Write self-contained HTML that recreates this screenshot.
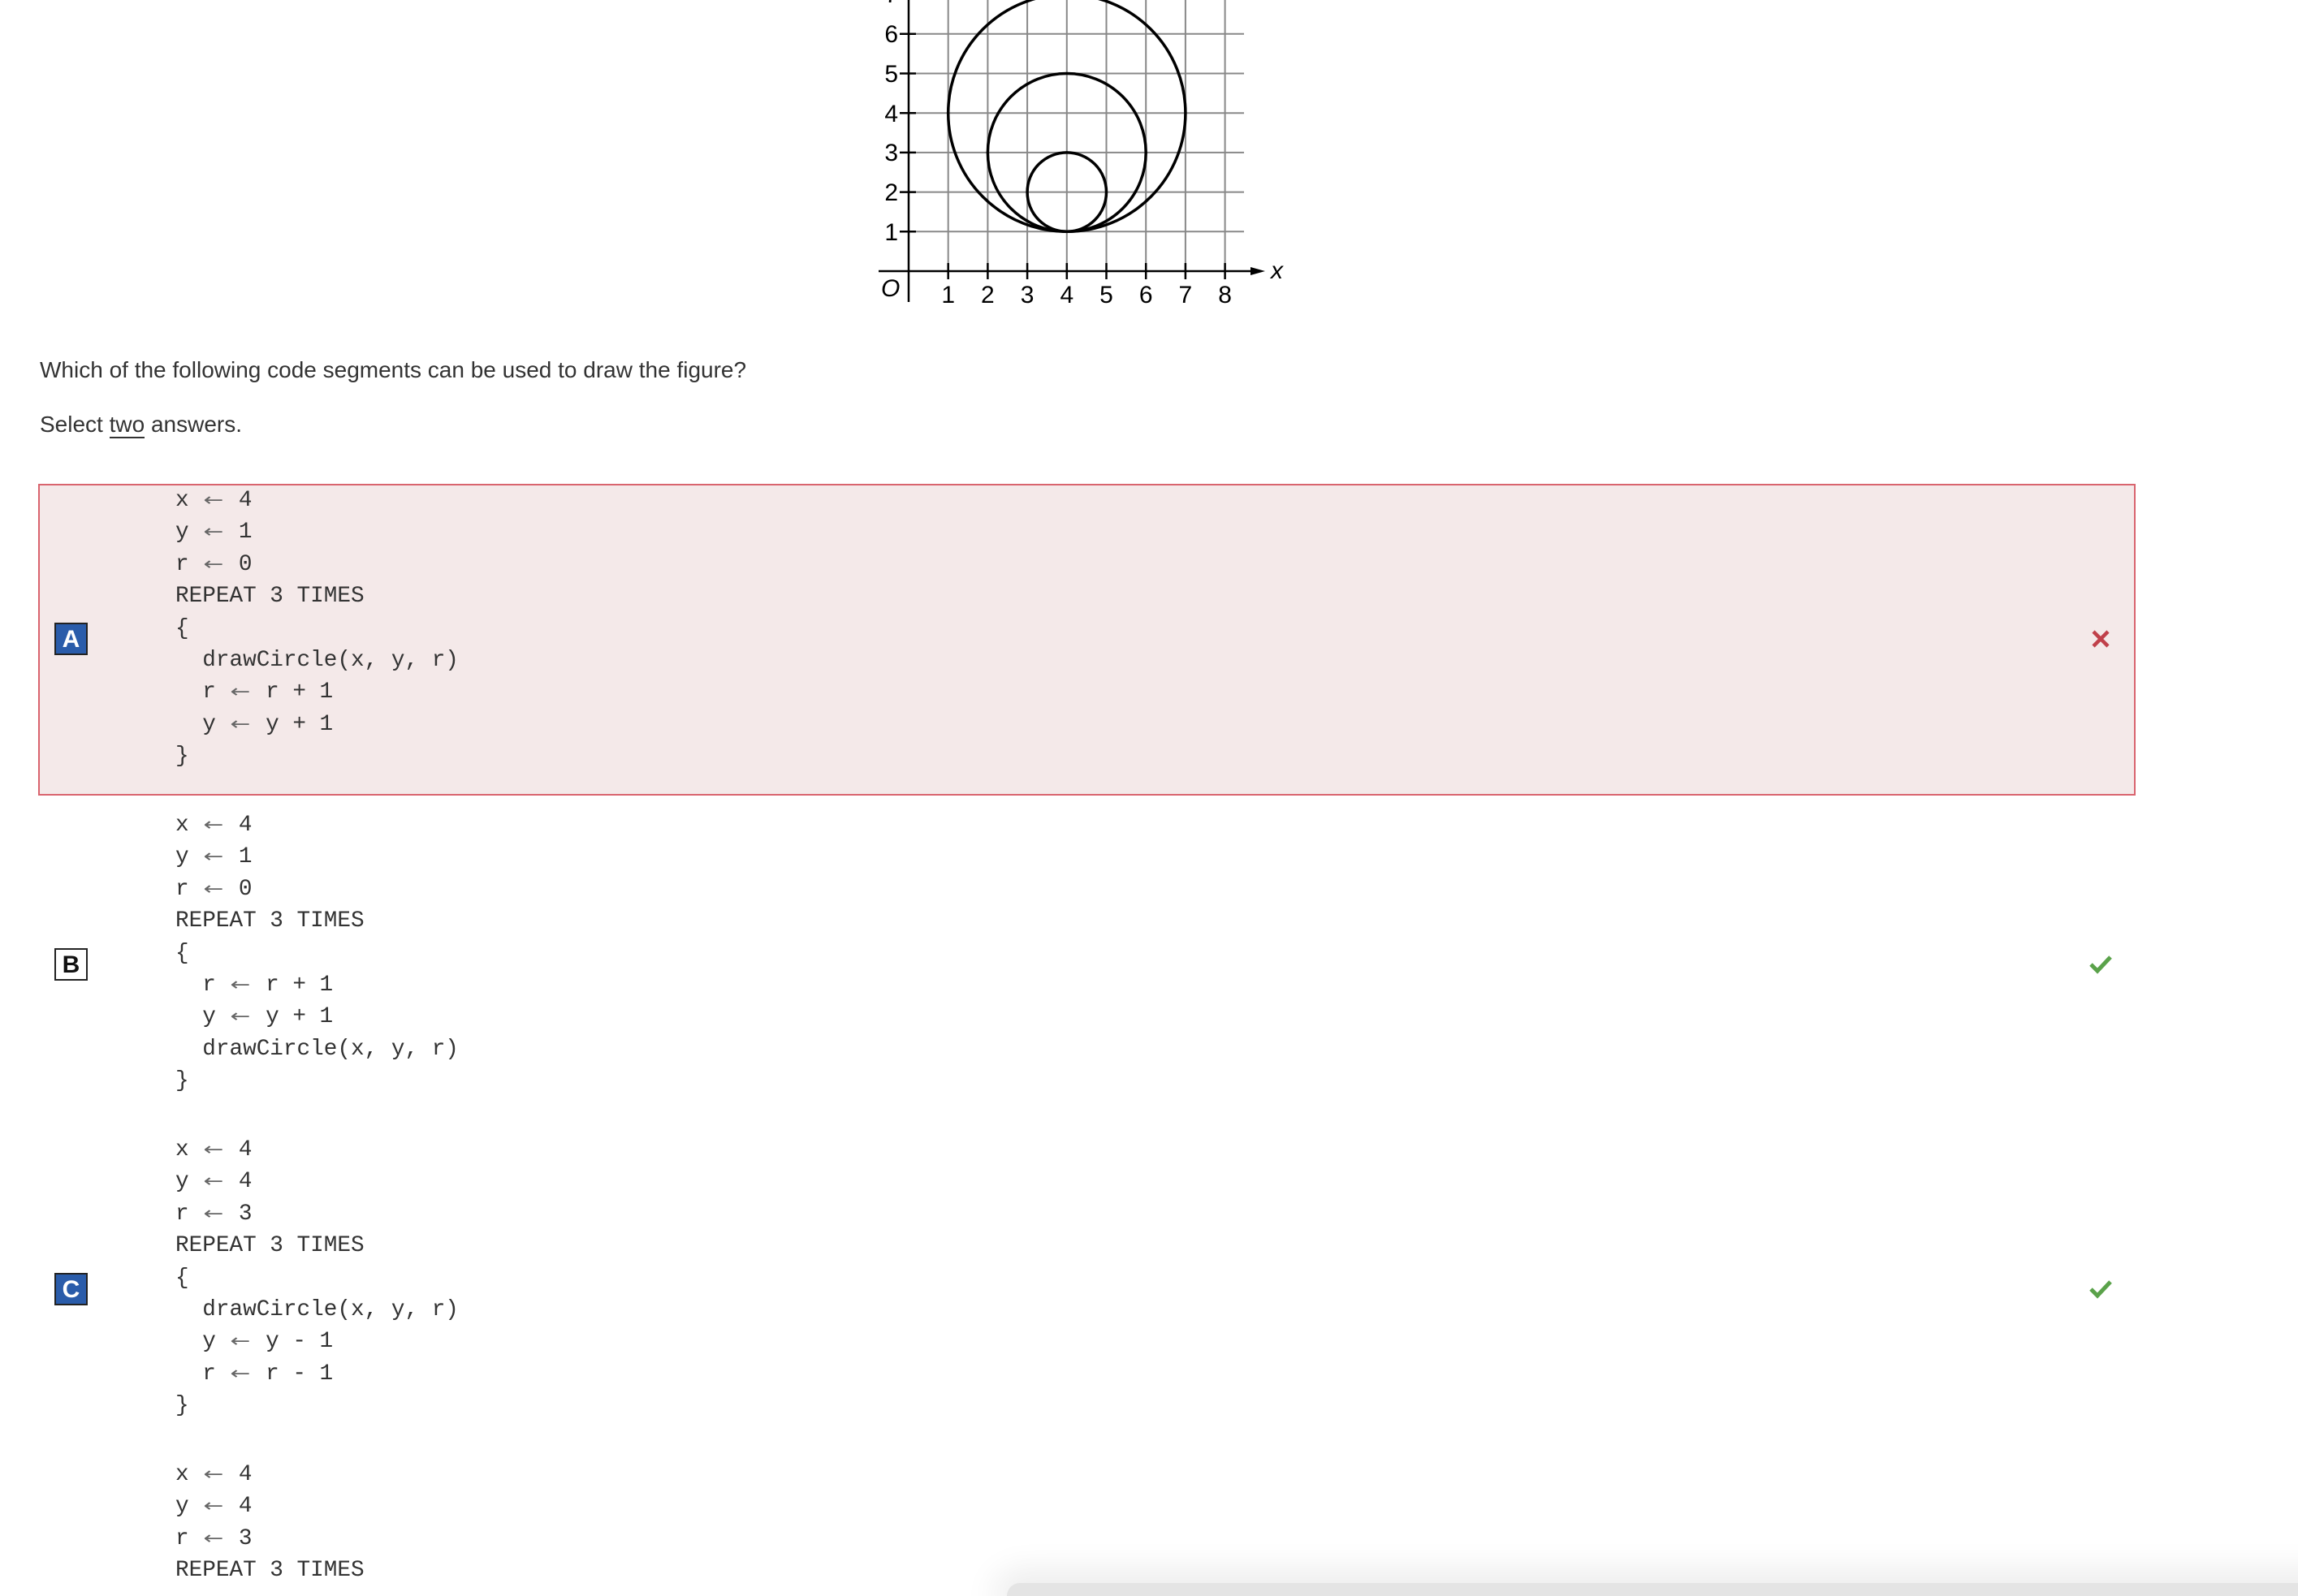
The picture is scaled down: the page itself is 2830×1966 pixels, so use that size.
<!DOCTYPE html>
<html><head><meta charset="utf-8"><style>
html,body{margin:0;padding:0;background:#fff;width:2830px;height:1966px;overflow:hidden;position:relative}
.t{position:absolute;left:49px;font-family:"Liberation Sans",sans-serif;font-size:28px;color:#333}
.box{position:absolute;left:47px;top:596px;width:2579px;height:380px;border:2px solid #d9646e;background:#f4e9e9}
.code{position:absolute;left:216px;font-family:"Liberation Mono",monospace;font-size:27.7px;color:#333;line-height:39.4px;white-space:pre}
.a{display:inline-block;width:28px;text-align:center;line-height:20px;font-family:"DejaVu Sans",sans-serif;font-size:22px;color:#666;transform:scaleX(1.35)}
.badge{position:absolute;left:67px;width:37px;height:36px;border:2px solid #222;font-family:"Liberation Sans",sans-serif;font-weight:bold;font-size:30px;text-align:center;line-height:37px}
.icon{position:absolute;left:2572px}
</style></head><body>
<svg style="position:absolute;left:0;top:0" width="1700" height="400">
<g stroke="#888" stroke-width="2">
<line x1="1167.7" y1="0" x2="1167.7" y2="342"/><line x1="1216.4" y1="0" x2="1216.4" y2="342"/><line x1="1265.1" y1="0" x2="1265.1" y2="342"/><line x1="1313.8" y1="0" x2="1313.8" y2="342"/><line x1="1362.5" y1="0" x2="1362.5" y2="342"/><line x1="1411.2" y1="0" x2="1411.2" y2="342"/><line x1="1459.9" y1="0" x2="1459.9" y2="342"/><line x1="1508.6" y1="0" x2="1508.6" y2="342"/>
<line x1="1119" y1="285.3" x2="1532" y2="285.3"/><line x1="1119" y1="236.6" x2="1532" y2="236.6"/><line x1="1119" y1="187.9" x2="1532" y2="187.9"/><line x1="1119" y1="139.2" x2="1532" y2="139.2"/><line x1="1119" y1="90.5" x2="1532" y2="90.5"/><line x1="1119" y1="41.8" x2="1532" y2="41.8"/>
</g>
<g stroke="#000" stroke-width="2.5">
<line x1="1119" y1="0" x2="1119" y2="372"/><line x1="1082" y1="334" x2="1548" y2="334"/>
<line x1="1108" y1="285.3" x2="1128" y2="285.3"/><line x1="1108" y1="236.6" x2="1128" y2="236.6"/><line x1="1108" y1="187.9" x2="1128" y2="187.9"/><line x1="1108" y1="139.2" x2="1128" y2="139.2"/><line x1="1108" y1="90.5" x2="1128" y2="90.5"/><line x1="1108" y1="41.8" x2="1128" y2="41.8"/>
<line x1="1167.7" y1="324" x2="1167.7" y2="344"/><line x1="1216.4" y1="324" x2="1216.4" y2="344"/><line x1="1265.1" y1="324" x2="1265.1" y2="344"/><line x1="1313.8" y1="324" x2="1313.8" y2="344"/><line x1="1362.5" y1="324" x2="1362.5" y2="344"/><line x1="1411.2" y1="324" x2="1411.2" y2="344"/><line x1="1459.9" y1="324" x2="1459.9" y2="344"/><line x1="1508.6" y1="324" x2="1508.6" y2="344"/>
</g>
<polygon points="1558,334 1540,329 1540,339" fill="#000"/>
<g fill="none" stroke="#000" stroke-width="3.5">
<circle cx="1313.8" cy="236.6" r="48.7"/><circle cx="1313.8" cy="187.9" r="97.4"/><circle cx="1313.8" cy="139.2" r="146.1"/>
</g>
<g font-family="Liberation Sans,sans-serif" font-size="30" fill="#000">
<g text-anchor="end"><text x="1106" y="296">1</text><text x="1106" y="247">2</text><text x="1106" y="198">3</text><text x="1106" y="150">4</text><text x="1106" y="101">5</text><text x="1106" y="52">6</text><text x="1106" y="3">7</text></g>
<g text-anchor="middle"><text x="1167.7" y="373">1</text><text x="1216.4" y="373">2</text><text x="1265.1" y="373">3</text><text x="1313.8" y="373">4</text><text x="1362.5" y="373">5</text><text x="1411.2" y="373">6</text><text x="1459.9" y="373">7</text><text x="1508.6" y="373">8</text></g>
<text x="1085" y="365" font-style="italic">O</text><text x="1565" y="343" font-style="italic">x</text>
</g>
</svg>
<div class="t" style="top:440px">Which of the following code segments can be used to draw the figure?</div>
<div class="t" style="top:507px">Select <span style="border-bottom:2px solid #333">two</span> answers.</div>
<div class="box"></div>
<div class="code" style="top:597px">x <span class="a">←</span> 4
y <span class="a">←</span> 1
r <span class="a">←</span> 0
REPEAT 3 TIMES
{
  drawCircle(x, y, r)
  r <span class="a">←</span> r + 1
  y <span class="a">←</span> y + 1
}</div>
<div class="badge" style="top:767px;background:#2a5caa;color:#fff">A</div>
<svg class="icon" style="top:772px" width="30" height="30"><path d="M6 6L24 24M24 6L6 24" stroke="#c0404a" stroke-width="4.5"/></svg>
<div class="code" style="top:997px">x <span class="a">←</span> 4
y <span class="a">←</span> 1
r <span class="a">←</span> 0
REPEAT 3 TIMES
{
  r <span class="a">←</span> r + 1
  y <span class="a">←</span> y + 1
  drawCircle(x, y, r)
}</div>
<div class="badge" style="top:1168px;background:#fff;color:#111">B</div>
<svg class="icon" style="top:1174px" width="30" height="28"><path d="M3 14L11 22L27 5" fill="none" stroke="#5aa24a" stroke-width="5"/></svg>
<div class="code" style="top:1397px">x <span class="a">←</span> 4
y <span class="a">←</span> 4
r <span class="a">←</span> 3
REPEAT 3 TIMES
{
  drawCircle(x, y, r)
  y <span class="a">←</span> y - 1
  r <span class="a">←</span> r - 1
}</div>
<div class="badge" style="top:1568px;background:#2a5caa;color:#fff">C</div>
<svg class="icon" style="top:1574px" width="30" height="28"><path d="M3 14L11 22L27 5" fill="none" stroke="#5aa24a" stroke-width="5"/></svg>
<div class="code" style="top:1797px;height:165px;overflow:hidden">x <span class="a">←</span> 4
y <span class="a">←</span> 4
r <span class="a">←</span> 3
REPEAT 3 TIMES</div>
<div style="position:absolute;left:1240px;top:1950px;width:1700px;height:16px;border-radius:40px 0 0 0;background:#e4e4e4;box-shadow:0 0 40px 16px rgba(0,0,0,0.08)"></div>
</body></html>
